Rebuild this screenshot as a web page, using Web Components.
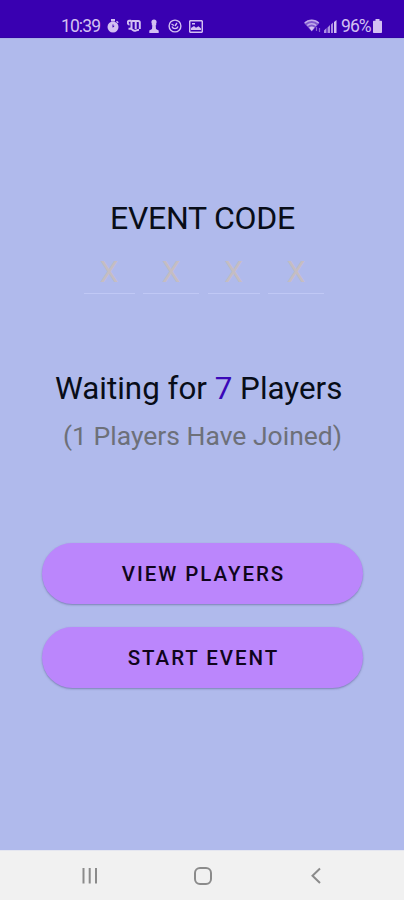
<!DOCTYPE html>
<html lang="en">
<head>
<meta charset="utf-8">
<title>Event lobby</title>
<style>
html,body{margin:0;height:100%;background:#b0baec}
body{font-family:Roboto,"Liberation Sans",sans-serif;overflow:hidden}
</style>
</head>
<body>
<event-app></event-app>
<script>
const define = (name, html) => customElements.define(name, class extends HTMLElement {
  constructor() {
    super();
    this.attachShadow({mode: 'open'}).innerHTML = html;
  }
});

define('status-bar', `
<style>
:host{display:flex;box-sizing:border-box;height:38px;padding:14px 22px 0 61px;background:#3900b1;color:#d3c0f2;justify-content:space-between;align-items:flex-start;border-bottom:1px solid #3203a4}
div{display:flex;align-items:center;height:24px}
span{font-size:17.5px;line-height:24px;white-space:nowrap}
.time{width:39px;letter-spacing:-.9px;margin-right:7px}
.pct{width:30px;letter-spacing:-.9px;margin:0 2px 0 4px}
svg{display:block;flex:none;fill:currentColor}
</style>
<div>
  <span class="time">10:39</span>
  <svg width="12" height="14" viewBox="0 0 12 14"><rect x="4" y="0" width="4" height="2.500"/><circle cx="6" cy="8" r="5.500"/><path d="M9.500 2.200l1.700 1.600" stroke="currentColor" stroke-width="1.400"/><path d="M6 5.500v2.700l1.200-1.300" fill="none" stroke="#3900b1" stroke-width="1"/></svg>
  <svg style="margin-left:8px" width="14" height="14" viewBox="0 0 14 14"><path d="M4.200 1.800H2.500C.2 1.800.2 5.500 2.500 5.500M4.500 1.500V9M4.500 2h6.800c1 0 1.500.5 1.500 1.500V10M8.700 2v8M1.500 9.800h2c2 0 2.500 2 4 2s2.500-1 4.500-1" fill="none" stroke="currentColor" stroke-width="2"/></svg>
  <svg style="margin-left:8px" width="10" height="14" viewBox="0 0 10 14"><circle cx="5" cy="3" r="2.600"/><path d="M2.800 5h4.400v1.200h-.5L7 10l2.700 1.500V14H.3v-2.500L3 10l.3-3.800h-.5z"/></svg>
  <svg style="margin-left:9px" width="14" height="14" viewBox="0 0 14 14"><g fill="none" stroke="currentColor" stroke-width="1.400"><circle cx="7" cy="7" r="5.900"/><path d="M4 7.500a3.200 3.200 0 0 0 6 0M3.500 5l2.500 1.500M7 7l2-3"/></g></svg>
  <svg style="margin-left:7px" width="14" height="13" viewBox="0 0 14 13"><rect x=".7" y=".7" width="12.600" height="11.600" rx="1" fill="none" stroke="currentColor" stroke-width="1.500"/><path d="M2 10V8l3-2 2 1.700 2.500-1.500L12 8.500V10zM3 3h3v1.500H3z"/></svg>
</div>
<div>
  <svg width="18" height="14" viewBox="0 0 18 14"><path d="M0 4C4-.5 11.500-.5 15.500 4L7.700 12.500z" opacity=".45"/><g fill="none" stroke="currentColor" stroke-width="1.500" opacity=".8"><path d="M.8 4C4.500.2 11 .2 14.700 4M3.200 6.500c2.400-2.500 6.600-2.500 9 0"/></g><path d="M5 8.500c1.500-1.500 4-1.500 5.500 0L7.700 12z"/><path d="M12.500 8v4M15.500 9v4" stroke="currentColor" stroke-width="1.200" opacity=".5"/></svg>
  <svg style="margin-left:2px" width="13" height="13" viewBox="0 0 13 13"><path d="M0 13v-2.500L2.500 8v5zM3.500 13V7.500L6 5v8zM7 13V4.500l2-2V13z" opacity=".75"/><path d="M10 13V2l2.500-2v13z"/></svg>
  <span class="pct">96%</span>
  <svg width="9" height="14" viewBox="0 0 9 14"><path d="M2.500 0h4v1.800H8c.6 0 1 .4 1 1V13c0 .6-.4 1-1 1H1c-.6 0-1-.4-1-1V2.800c0-.6.4-1 1-1h1.500z"/></svg>
</div>`);

define('code-slot', `
<style>
:host{display:block;box-sizing:border-box;height:40px;text-align:center;font-size:30px;line-height:35px;color:#c5bdc2;border-bottom:1px solid #c0c8f5}
</style><slot></slot>`);

define('event-code', `
<style>
:host{display:block}
h1{margin:0;font-weight:400;font-size:32px;line-height:38px;text-align:center;color:#080d18;letter-spacing:-.25px;padding-left:1px}
.row{display:grid;grid-template-columns:51px 56px 52px 56px;column-gap:8.500px;justify-content:center;margin-top:17px;padding-left:4px}
</style>
<h1><slot></slot></h1>
<div class="row"><code-slot>X</code-slot><code-slot>X</code-slot><code-slot>X</code-slot><code-slot>X</code-slot></div>`);

define('player-status', `
<style>
:host{display:block;white-space:nowrap}
p{margin:0}
.wait{padding-left:55px;font-size:31.350px;line-height:38px;color:#080d18}
.joined{padding-left:63px;font-size:26.500px;line-height:32px;color:#6d7079;margin-top:12px}
::slotted(b){font-weight:400;color:#3a08b8}
</style>
<p class="wait"><slot></slot></p>
<p class="joined"><slot name="joined"></slot></p>`);

define('pill-button', `
<style>
:host{display:block}
button{display:block;width:100%;height:61px;border:0;border-radius:31px;padding:2px 0 0 2px;background:#bb86fc;color:#10051c;font:500 20.500px/59px Roboto,"Liberation Sans",sans-serif;letter-spacing:1.950px;box-shadow:0 1px 2px rgba(70,75,125,.5)}
</style>
<button><slot></slot></button>`);

define('nav-bar', `
<style>
:host{display:flex;box-sizing:border-box;height:50px;background:#f1f1f1;border-top:1px solid #e4e6f0;padding:0 78px 0 80px;justify-content:space-between;align-items:center}
svg{display:block;fill:none;stroke:#8b8b8b;stroke-width:2}
</style>
<svg width="20" height="20" viewBox="0 0 20 20"><path d="M3.500 2v15.500M9.700 2v15.500M16 2v15.500"/></svg>
<svg width="20" height="20" viewBox="0 0 20 20"><rect x="2" y="2" width="16" height="16" rx="5"/></svg>
<svg width="20" height="20" viewBox="0 0 20 20"><path d="M14 2.500L6.500 9.700l7.500 7.300"/></svg>`);

define('event-app', `
<style>
:host{display:flex;flex-direction:column;width:404px;height:900px;background:#b0baec}
main{flex:1;display:flex;flex-direction:column;border-top:1px solid #a9b1e8;box-sizing:border-box}
event-code{margin-top:160px}
player-status{margin-top:76px}
.actions{display:grid;gap:22.500px;margin:91px 41px 0 42px}
</style>
<status-bar></status-bar>
<main>
  <event-code>EVENT CODE</event-code>
  <player-status>Waiting for <b>7</b> Players<span slot="joined">(1 Players Have Joined)</span></player-status>
  <div class="actions"><pill-button>VIEW PLAYERS</pill-button><pill-button>START EVENT</pill-button></div>
</main>
<nav-bar></nav-bar>`);
</script>
</body>
</html>
